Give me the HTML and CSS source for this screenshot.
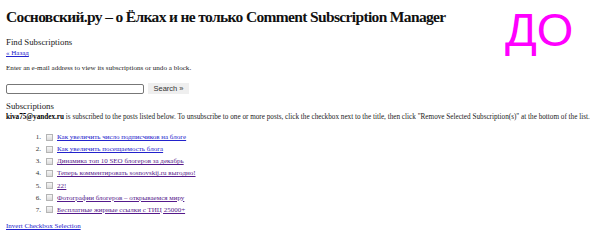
FILE: index.html
```html
<!DOCTYPE html>
<html lang="ru">
<head>
<meta charset="utf-8">
<title>Comment Subscription Manager</title>
<link rel="stylesheet" href="styles.css">
</head>
<body>
<div class="page">
  <h1 class="title">Сосновский.ру – о Ёлках и не только Comment Subscription Manager</h1>
  <div class="stamp">ДО</div>
  <h3 class="section">Find Subscriptions</h3>
  <a class="back" href="#">« Назад</a>
  <p class="hint">Enter an e-mail address to view its subscriptions or undo a block.</p>
  <form class="search">
    <input class="email" type="text">
    <button class="btn" type="button">Search »</button>
  </form>
  <h3 class="section sub">Subscriptions</h3>
  <p class="desc"><b>kiva75@yandex.ru</b> is subscribed to the posts listed below. To unsubscribe to one or more posts, click the checkbox next to the title, then click "Remove Selected Subscription(s)" at the bottom of the list.</p>
  <ul class="posts">
    <li class="post"><span class="num">1.</span><span class="cb"></span><a href="#">Как увеличить число подписчиков на блоге</a></li>
    <li class="post"><span class="num">2.</span><span class="cb"></span><a href="#">Как увеличить посещаемость блога</a></li>
    <li class="post"><span class="num">3.</span><span class="cb"></span><a class="visited" href="#">Динамика топ 10 SEO блогеров за декабрь</a></li>
    <li class="post"><span class="num">4.</span><span class="cb"></span><a class="visited" href="#">Теперь комментировать sosnovskij.ru выгодно!</a></li>
    <li class="post"><span class="num">5.</span><span class="cb"></span><a class="visited" href="#">22!</a></li>
    <li class="post"><span class="num">6.</span><span class="cb"></span><a class="visited" href="#">Фотографии блогеров – открываемся миру</a></li>
    <li class="post"><span class="num">7.</span><span class="cb"></span><a class="visited" href="#">Бесплатные жирные ссылки с ТИЦ 25000+</a></li>
  </ul>
  <a class="invert" href="#">Invert Checkbox Selection</a>
</div>
</body>
</html>
```
FILE: styles.css
```css
html, body {
  margin: 0;
  padding: 0;
  background: #fff;
}
body {
  font-family: "Liberation Serif", "Times New Roman", serif;
  color: #000;
}
.page {
  position: relative;
  padding: 6px 6px 0 6px;
  display: flex;
  flex-direction: column;
  align-items: flex-start;
}
.title {
  margin: 0;
  font-size: 15.5px;
  letter-spacing: -0.65px;
  line-height: 22px;
  font-weight: bold;
  color: #111;
  white-space: nowrap;
}
.stamp {
  position: absolute;
  left: 505px;
  top: 0px;
  font-family: "Liberation Sans", Arial, sans-serif;
  font-size: 47px;
  line-height: 60px;
  color: #ff00ff;
}
.section {
  margin: 8px 0 0 0;
  font-size: 8.8px;
  line-height: 12px;
  font-weight: normal;
  color: #222;
}
.back {
  font-size: 7px;
  line-height: 10px;
  color: #2222cc;
}
.hint {
  margin: 5px 0 0 0;
  font-size: 7.1px;
  line-height: 10px;
  color: #222;
}
.search {
  margin: 10px 0 0 0;
  display: flex;
  align-items: center;
  gap: 4px;
}
.email {
  box-sizing: border-box;
  width: 138px;
  height: 10px;
  margin: 0;
  padding: 0;
  border: 1px solid #777;
  border-radius: 2px;
  background: #fff;
}
.btn {
  box-sizing: border-box;
  height: 11px;
  width: 41px;
  margin: 0;
  padding: 0;
  border: none;
  background: #efefef;
  font-family: "Liberation Sans", Arial, sans-serif;
  font-size: 7.5px;
  line-height: 11px;
  color: #333;
}
.sub {
  margin-top: 6px;
}
.desc {
  margin: 0;
  font-size: 7.2px;
  line-height: 10px;
  color: #222;
  white-space: nowrap;
}
.desc b {
  color: #000;
}
.posts {
  margin: 9px 0 0 0;
  padding: 0;
  list-style: none;
  display: flex;
  flex-direction: column;
}
.post {
  height: 12.15px;
  display: flex;
  align-items: center;
  font-size: 7px;
  color: #333;
}
.num {
  width: 35px;
  text-align: right;
}
.cb {
  box-sizing: border-box;
  width: 7px;
  height: 7px;
  margin: 0 4px 0 5px;
  border: 1px solid #b5b5b5;
  background: linear-gradient(#f6f6f6, #dadada);
}
.post a {
  color: #2222cc;
}
.post a.visited {
  color: #551a8b;
}
.invert {
  margin-top: 5px;
  font-size: 7px;
  line-height: 10px;
  color: #2222cc;
}
```
